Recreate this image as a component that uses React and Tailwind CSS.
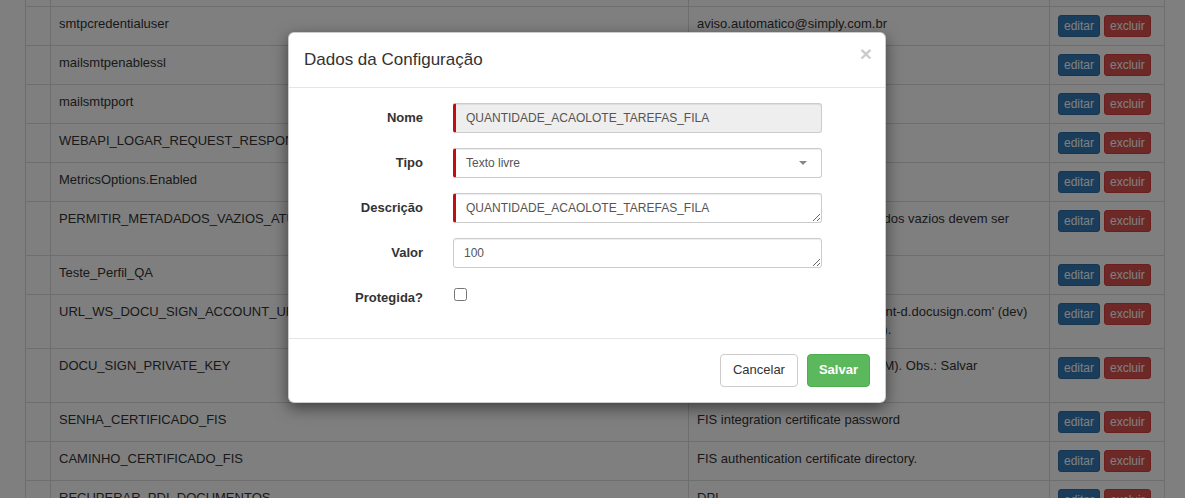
import React from 'react';

const rows = [
  { name: 'smtpcredentialuser', value: ['aviso.automatico@simply.com.br'] },
  { name: 'mailsmtpenablessl', value: ['true'] },
  { name: 'mailsmtpport', value: ['587'] },
  { name: 'WEBAPI_LOGAR_REQUEST_RESPONSE', value: ['false'] },
  { name: 'MetricsOptions.Enabled', value: ['true'] },
  {
    name: 'PERMITIR_METADADOS_VAZIOS_ATUALIZACAO',
    value: ['Define se os campos de metadados vazios devem ser', 'aceitos na atualização.'],
  },
  { name: 'Teste_Perfil_QA', value: ['QA'] },
  {
    name: 'URL_WS_DOCU_SIGN_ACCOUNT_URL',
    value: ["URL da conta. Ex.: 'https://account-d.docusign.com' (dev)", "'https://docusign.com' (produção)."],
  },
  { name: 'DOCU_SIGN_PRIVATE_KEY', value: ['Chaves privadas do usuário (PEM). Obs.: Salvar', 'sem quebras.'] },
  { name: 'SENHA_CERTIFICADO_FIS', value: ['FIS integration certificate password'] },
  { name: 'CAMINHO_CERTIFICADO_FIS', value: ['FIS authentication certificate directory.'] },
  { name: 'RECUPERAR_PDI_DOCUMENTOS', value: ['DPI'] },
];

const cell = 'border border-[#ddd] p-2 align-top';
const inputBase =
  'w-[369px] h-[30px] px-[10px] text-[12px] leading-[1.5] text-[#555] border border-[#ccc] rounded-[3px] shadow-[inset_0_1px_1px_rgba(0,0,0,0.075)] outline-none';

function ConfigTable() {
  return (
    <table className="ml-[25px] border-collapse table-fixed w-[1139px] text-[13px] leading-[1.42857] text-[#333]">
      <colgroup>
        <col className="w-[25px]" />
        <col className="w-[638px]" />
        <col className="w-[361px]" />
        <col className="w-[115px]" />
      </colgroup>
      <tbody>
        {/* what is left of the previous row */}
        <tr>
          <td className="border-x border-b border-[#ddd] h-[6px] p-0" />
          <td className="border-x border-b border-[#ddd] h-[6px] p-0" />
          <td className="border-x border-b border-[#ddd] h-[6px] p-0" />
          <td className="border-x border-b border-[#ddd] h-[6px] p-0" />
        </tr>
        {rows.map((r) => (
          <tr key={r.name}>
            <td className={cell} />
            <td className={cell + ' whitespace-nowrap overflow-hidden'}>{r.name}</td>
            <td className={cell + ' whitespace-nowrap overflow-hidden'}>
              {r.value.map((line, i) => (
                <div key={i}>{line}</div>
              ))}
            </td>
            <td className={cell}>
              <div className="flex gap-1">
                <button className="px-[5px] py-px text-[12px] leading-[1.5] text-white bg-[#337ab7] border border-[#2e6da4] rounded-[3px]">
                  editar
                </button>
                <button className="px-[5px] py-px text-[12px] leading-[1.5] text-white bg-[#d9534f] border border-[#d43f3a] rounded-[3px]">
                  excluir
                </button>
              </div>
            </td>
          </tr>
        ))}
      </tbody>
    </table>
  );
}

function FormRow({ label, children }) {
  return (
    <div className="flex items-start mb-[15px]">
      <label className="w-[119px] shrink-0 text-right font-bold text-[13px] leading-[1.42857] text-[#333] pt-[6px]">
        {label}
      </label>
      <div className="ml-[30px]">{children}</div>
    </div>
  );
}

function ConfigModal() {
  return (
    <div className="absolute left-[288px] top-[32px] w-[598px] bg-white rounded-[6px] border border-black/20 shadow-[0_5px_15px_rgba(0,0,0,0.5)] text-[#333]">
      <div className="flex items-start justify-between p-[15px] border-b border-[#e5e5e5]">
        <h4 className="text-[17px] leading-[1.42857]">Dados da Configuração</h4>
        <button className="text-[21px] font-bold leading-none text-black opacity-20 -mt-[5px] -mr-[2px]">×</button>
      </div>

      <div className="px-[15px] pt-[15px] pb-[15px]">
        <FormRow label="Nome">
          <input
            className={inputBase + ' bg-[#eee] border-l-[3px] border-l-[#c10f0f]'}
            value="QUANTIDADE_ACAOLOTE_TAREFAS_FILA"
            readOnly
          />
        </FormRow>
        <FormRow label="Tipo">
          <div className={inputBase + ' bg-white border-l-[3px] border-l-[#c10f0f] flex items-center justify-between'}>
            <span>Texto livre</span>
            <svg width="8" height="4" viewBox="0 0 8 4" className="mr-[4px]">
              <path d="M0 0h8L4 4z" fill="#888" />
            </svg>
          </div>
        </FormRow>
        <FormRow label="Descrição">
          <textarea
            rows={1}
            className={inputBase + ' block py-[5px] bg-white border-l-[3px] border-l-[#c10f0f]'}
            defaultValue="QUANTIDADE_ACAOLOTE_TAREFAS_FILA"
          />
        </FormRow>
        <FormRow label="Valor">
          <textarea rows={1} className={inputBase + ' block py-[5px] bg-white'} defaultValue="100" />
        </FormRow>
        <FormRow label="Protegida?">
          <input type="checkbox" className="w-[13px] h-[13px] mt-[5px] ml-px" />
        </FormRow>
      </div>

      <div className="flex justify-end gap-[9px] p-[15px] border-t border-[#e5e5e5]">
        <button className="px-[12px] py-[6px] text-[13px] leading-[1.42857] text-[#333] bg-white border border-[#ccc] rounded-[4px]">
          Cancelar
        </button>
        <button className="px-[11px] py-[6px] text-[13px] leading-[1.42857] font-bold text-white bg-[#5cb85c] border border-[#4cae4c] rounded-[4px]">
          Salvar
        </button>
      </div>
    </div>
  );
}

export default function App() {
  return (
    <div className="relative w-full h-[498px] overflow-hidden bg-white font-['Liberation_Sans',Arial,sans-serif]">
      <ConfigTable />
      <div className="absolute inset-0 bg-black/50" />
      <ConfigModal />
    </div>
  );
}
